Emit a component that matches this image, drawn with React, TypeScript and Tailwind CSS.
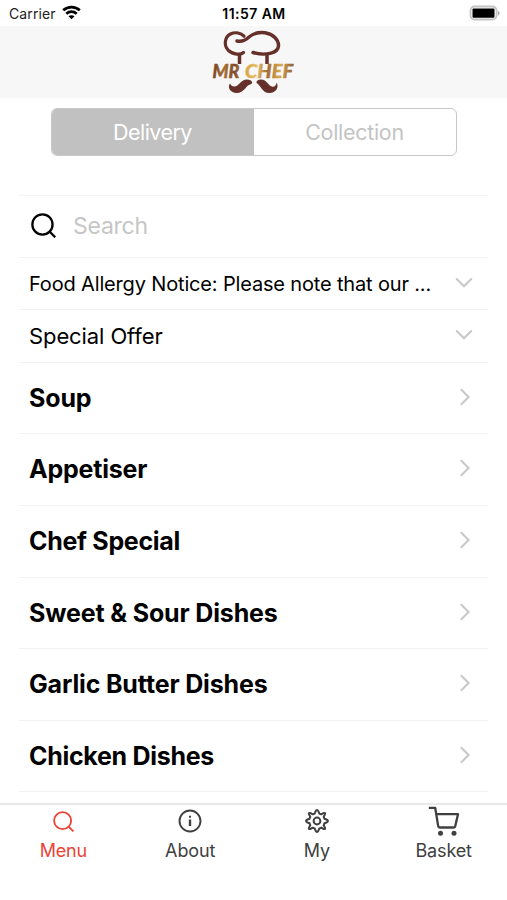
import React from "react";

const categories: { name: string; height: string; tracking: string }[] = [
  { name: "Soup", height: "h-[71px]", tracking: "tracking-[-0.15px]" },
  { name: "Appetiser", height: "h-[72px]", tracking: "tracking-[-0.2px]" },
  { name: "Chef Special", height: "h-[72px]", tracking: "tracking-[-0.3px]" },
  { name: "Sweet & Sour Dishes", height: "h-[71px]", tracking: "tracking-[-0.15px]" },
  { name: "Garlic Butter Dishes", height: "h-[72px]", tracking: "tracking-[-0.15px]" },
  { name: "Chicken Dishes", height: "h-[71px]", tracking: "tracking-[-0.3px]" },
];

function SearchIcon({ size, stroke }: { size: number; stroke: number }) {
  return (
    <svg width={size} height={size} viewBox="0 0 24 24" fill="none" stroke="currentColor" strokeWidth={stroke}>
      <circle cx="11" cy="11" r="9.7" />
      <path d="M17.8 17.8 23.3 23.3" />
    </svg>
  );
}

function ChevronDown() {
  return (
    <svg className="mb-[2px]" width="18" height="12" viewBox="0 0 18 12" fill="none" stroke="#c8c8c8" strokeWidth="2">
      <path d="M1.2 1.5 9 9.3l7.8-7.8" />
    </svg>
  );
}

function ChevronRight() {
  return (
    <svg className="mb-[3px]" width="12" height="18" viewBox="0 0 12 18" fill="none" stroke="#c8c8c8" strokeWidth="2">
      <path d="M1.8 1.2 9.6 9l-7.8 7.8" />
    </svg>
  );
}

function Logo() {
  return (
    <svg className="mr-[2px]" width="90" height="72" viewBox="0 0 90 72" fill="none">
      <defs>
        <linearGradient id="gold" gradientUnits="userSpaceOnUse" x1="4" y1="39" x2="86" y2="46">
          <stop offset="0" stopColor="#6f3c24" />
          <stop offset="0.15" stopColor="#a8702f" />
          <stop offset="0.28" stopColor="#7d4a2c" />
          <stop offset="0.42" stopColor="#d9a745" />
          <stop offset="0.55" stopColor="#e6c06a" />
          <stop offset="0.68" stopColor="#a06c34" />
          <stop offset="0.83" stopColor="#d9aa50" />
          <stop offset="1" stopColor="#8a5530" />
        </linearGradient>
      </defs>
      <g stroke="#643029" strokeLinecap="round">
        <path d="M35.500 26.500C33 29 25 28.800 20.500 24.500 15.500 19.500 16.500 11 22.500 8c5-2.500 10.500-1 13.500 2.200" strokeWidth="3.200" />
        <path d="M29 15c5 1.200 8.500-.7 12-4C45.500 7.300 51 5.800 57 6.700c8 1.200 14 7.300 13.500 13.300C70 27.500 57 30 45 26.500" strokeWidth="3.400" />
        <path d="M31.500 27.500v10.500M59 27.500v10.500" strokeWidth="3.500" strokeLinecap="butt" />
      </g>
      <path
        d="M22 57.500c-3 4 .5 9.500 6.500 9.500 8 0 9-7.500 13.500-8.500 1.300-.3 1.800-.8 2.300-1.700-.5-2.200-2.600-3.300-5.300-3.300-6 0-8 6.500-12 7-2.500.2-4-1-5-3Z"
        fill="#643029"
      />
      <path
        d="M68.500 56.500c3 4.500-.5 10.500-7 10.500-8 0-8.500-8-13-10-.3-2 1.500-3.500 4.500-3.500 6 0 7.500 7 11.500 7.200 2.500.1 4-1.700 4-4.200Z"
        fill="#643029"
      />
      <g
        fill="url(#gold)"
        stroke="url(#gold)"
        strokeWidth="0.400"
        fontFamily="Lato, sans-serif"
        fontStyle="italic"
        fontWeight="900"
        fontSize="18"
      >
        <text x="4.500" y="52" textLength="27" lengthAdjust="spacingAndGlyphs">MR</text>
        <text x="37" y="52" textLength="48" lengthAdjust="spacingAndGlyphs">CHEF</text>
      </g>
    </svg>
  );
}

function InfoIcon() {
  return (
    <svg width="24" height="24" viewBox="0 0 24 24" fill="none" stroke="currentColor" strokeWidth="1.900">
      <circle cx="12" cy="12" r="10.500" />
      <path d="M12 10.500v6.500" strokeWidth="2.400" />
      <path d="M12 6.800v2" strokeWidth="2" />
    </svg>
  );
}

function GearIcon() {
  return (
    <svg width="26" height="26" viewBox="0 0 26 26" fill="none" stroke="currentColor" strokeWidth="2" strokeLinejoin="round">
      <circle cx="13" cy="13" r="3.400" />
      <path d="M11.500 3.500Q13 .6 14.500 3.500L15.300 5.600 17.300 6.300 19.300 5.200Q21.900 4.100 20.800 6.700L19.700 8.700 20.400 10.700 22.500 11.500Q25.400 13 22.500 14.500L20.400 15.300 19.700 17.300 20.800 19.300Q21.900 21.900 19.300 20.800L17.300 19.700 15.300 20.400 14.500 22.500Q13 25.400 11.500 22.500L10.700 20.400 8.700 19.700 6.700 20.800Q4.100 21.900 5.200 19.300L6.300 17.300 5.600 15.300 3.500 14.500Q.6 13 3.500 11.500L5.600 10.700 6.300 8.700 5.200 6.700Q4.100 4.100 6.700 5.200L8.700 6.300 10.700 5.600Z" />
    </svg>
  );
}

function CartIcon() {
  return (
    <svg width="32" height="30" viewBox="0 0 32 30" fill="none" stroke="currentColor" strokeWidth="2.300" strokeLinejoin="round">
      <path d="M.8 1.800h6.400l2.900 17.800q.3 1.900 2.100 1.900h13.200q1.700 0 2-1.900L30 8.200H8.500" />
      <circle cx="12.500" cy="27.200" r="2.500" fill="currentColor" stroke="none" />
      <circle cx="26" cy="27.200" r="2.500" fill="currentColor" stroke="none" />
    </svg>
  );
}

function Tab({ label, color, children }: { label: string; color: string; children: React.ReactNode }) {
  return (
    <div className={`flex flex-1 flex-col items-center ${color}`}>
      <div className="mb-[2px] flex h-[32px] items-center justify-center">{children}</div>
      <span className="text-[18px] leading-6 tracking-[-0.15px]">{label}</span>
    </div>
  );
}

export default function App() {
  return (
    <div className="flex h-[900px] w-[507px] flex-col overflow-hidden bg-white font-['Inter','Liberation_Sans',sans-serif] text-black">
      <div className="grid h-[26px] shrink-0 grid-cols-3 items-center pr-[6px] pl-[9px]">
        <div className="flex items-center gap-[6px] text-[14px] tracking-[0.1px] text-[#222]">
          <span>Carrier</span>
          <svg className="mb-px" width="19" height="15" viewBox="0 0 19 15" fill="none" stroke="#000" strokeWidth="2.800">
            <path d="M1.200 5.300c4.700-4.300 11.900-4.300 16.600 0" />
            <path d="M4.300 8.700c3-2.700 7.400-2.700 10.400 0" />
            <path d="m9.500 14.300-3-3c1.700-1.500 4.300-1.500 6 0Z" fill="#000" stroke="none" />
          </svg>
        </div>
        <div className="mr-[2px] text-center text-[14px] font-semibold tracking-[0.45px] whitespace-nowrap">11:57 AM</div>
        <div className="flex justify-end">
          <svg width="32" height="16" viewBox="0 0 32 16">
            <rect x="1.500" y="1.500" width="26" height="13" rx="4" fill="#fff" stroke="#c4c4c4" strokeWidth="1.800" />
            <rect x="3.500" y="3.500" width="22" height="9.300" rx="1" fill="#000" />
            <path d="M28.800 5.700c2.400.8 2.400 4 0 4.800Z" fill="#aaa" />
          </svg>
        </div>
      </div>

      <header className="flex h-[72px] shrink-0 justify-center bg-[#f7f7f7]">
        <Logo />
      </header>

      <div className="mx-auto mt-[10px] flex h-[48px] w-[406px] shrink-0 overflow-hidden rounded-[6px] border-[1.5px] border-[#c8c8c8] text-[21.500px]">
        <div className="flex w-[202px] items-center justify-center bg-[#c1c1c1] tracking-[-0.55px] text-white">Delivery</div>
        <div className="flex flex-1 items-center justify-center tracking-[-0.3px] text-[#c4c4c4]">Collection</div>
      </div>

      <main className="mx-[19px] mt-[39px] flex flex-col">
        <div className="flex h-[62px] items-center border-t border-[#f2f2f2] pl-3">
          <div className="mb-[2px]">
            <SearchIcon size={25} stroke={2.2} />
          </div>
          <span className="ml-[17px] text-[23px] tracking-[-0.25px] text-[#c6c6c6]">Search</span>
        </div>
        <div className="flex h-[52px] items-center justify-between border-t border-[#f2f2f2] pr-[15px] pl-[10px]">
          <span className="text-[20px] tracking-[-0.16px] whitespace-nowrap">Food Allergy Notice: Please note that our ...</span>
          <ChevronDown />
        </div>
        <div className="flex h-[53px] items-center justify-between border-t border-[#f2f2f2] pr-[15px] pl-[10px]">
          <span className="text-[22px] tracking-[-0.1px]">Special Offer</span>
          <ChevronDown />
        </div>
        {categories.map((c) => (
          <div key={c.name} className={`flex items-center justify-between border-t border-[#f2f2f2] pr-[17px] pl-[10px] ${c.height}`}>
            <span className={`mt-px text-[25px] font-bold whitespace-nowrap ${c.tracking}`}>{c.name}</span>
            <ChevronRight />
          </div>
        ))}
        <div className="h-[12px] border-t border-[#f2f2f2]" />
      </main>

      <nav className="flex flex-1 border-t-2 border-[#e9e9e9]">
        <Tab label="Menu" color="text-[#ea4335]">
          <SearchIcon size={21} stroke={2.1} />
        </Tab>
        <Tab label="About" color="text-[#404040]">
          <InfoIcon />
        </Tab>
        <Tab label="My" color="text-[#404040]">
          <GearIcon />
        </Tab>
        <Tab label="Basket" color="text-[#404040]">
          <CartIcon />
        </Tab>
      </nav>
    </div>
  );
}
